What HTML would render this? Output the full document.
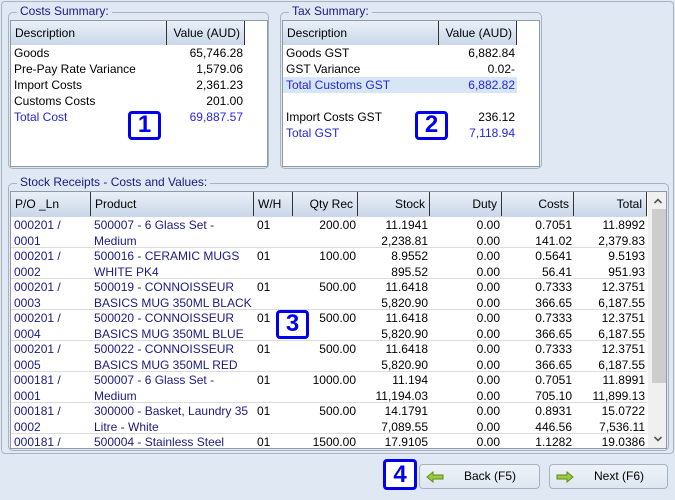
<!DOCTYPE html>
<html><head><meta charset="utf-8"><style>
*{box-sizing:border-box;margin:0;padding:0}
body{width:675px;height:500px;background:#dfe8f3;font-family:"Liberation Sans",sans-serif;font-size:12px;position:relative;overflow:hidden;color:#000}
.a{position:absolute}
.outer{left:1px;top:1px;width:673px;height:453px;border:1px solid #aab4c0;border-radius:4px}
.grp{border:1px solid #a9b3bf;border-radius:5px}
.leg{background:#dfe8f3;color:#1a1a80;padding:0 3px;line-height:13px}
.list{background:#fff;border:1px solid #8e9aa8}
.hdr{background:linear-gradient(#eaf0f8,#c9d7e8);height:24px;}
.hc{position:absolute;top:0;height:24px;line-height:24px;padding:0 4px;border-right:1px solid #333}
.r{text-align:right}
.blue{color:#2424e0}
.nav{color:#1a1a80}
.t{position:absolute;line-height:16px;white-space:nowrap}
.badge{position:absolute;border:3px solid #0000f0;border-radius:4px;background:#fff;color:#0000f0;font-weight:bold;font-size:24px;line-height:22px;text-align:center}
.btn{position:absolute;top:464px;height:25px;border:1px solid #a9b3bf;border-radius:4px;background:linear-gradient(#eef3f9,#dde6f1);line-height:23px;font-size:12px}
.rowline{position:absolute;left:0;width:636px;height:1px;background:#dcdcdc}
</style></head><body>
<div class="a outer"></div>

<div class="a grp" style="left:8px;top:12px;width:261px;height:157px"></div>
<div class="a leg" style="left:17px;top:5px">Costs Summary:</div>
<div class="a list" style="left:10px;top:20px;width:258px;height:147px">
 <div class="hdr" style="width:234px;position:relative">
  <div class="hc" style="left:0;width:156px">Description</div>
  <div class="hc r" style="left:156px;width:78px">Value (AUD)</div>
 </div>
 <div class="t" style="left:3px;top:24px">Goods</div><div class="t r" style="left:150px;width:82px;top:24px">65,746.28</div>
 <div class="t" style="left:3px;top:40px">Pre-Pay Rate Variance</div><div class="t r" style="left:150px;width:82px;top:40px">1,579.06</div>
 <div class="t" style="left:3px;top:56px">Import Costs</div><div class="t r" style="left:150px;width:82px;top:56px">2,361.23</div>
 <div class="t" style="left:3px;top:72px">Customs Costs</div><div class="t r" style="left:150px;width:82px;top:72px">201.00</div>
 <div class="t blue" style="left:3px;top:88px">Total Cost</div><div class="t r blue" style="left:150px;width:82px;top:88px">69,887.57</div>
</div>
<div class="badge" style="left:128px;top:111px;width:33px;height:29px">1</div>

<div class="a grp" style="left:280px;top:12px;width:262px;height:157px"></div>
<div class="a leg" style="left:289px;top:5px">Tax Summary:</div>
<div class="a list" style="left:282px;top:20px;width:258px;height:147px">
 <div class="hdr" style="width:234px;position:relative">
  <div class="hc" style="left:0;width:156px">Description</div>
  <div class="hc r" style="left:156px;width:78px">Value (AUD)</div>
 </div>
 <div class="t" style="left:3px;top:24px">Goods GST</div><div class="t r" style="left:150px;width:82px;top:24px">6,882.84</div>
 <div class="t" style="left:3px;top:40px">GST Variance</div><div class="t r" style="left:150px;width:82px;top:40px">0.02-</div>
 <div class="a" style="left:0;top:56px;width:234px;height:16px;background:#d7e6f5"></div>
 <div class="t blue" style="left:3px;top:56px">Total Customs GST</div><div class="t r blue" style="left:150px;width:82px;top:56px">6,882.82</div>
 <div class="t" style="left:3px;top:88px">Import Costs GST</div><div class="t r" style="left:150px;width:82px;top:88px">236.12</div>
 <div class="t blue" style="left:3px;top:104px">Total GST</div><div class="t r blue" style="left:150px;width:82px;top:104px">7,118.94</div>
</div>
<div class="badge" style="left:415px;top:111px;width:33px;height:29px">2</div>

<div class="a grp" style="left:8px;top:183px;width:661px;height:268px"></div>
<div class="a leg" style="left:17px;top:176px">Stock Receipts - Costs and Values:</div>
<div class="a list" style="left:10px;top:191px;width:657px;height:258px;overflow:hidden">
 <div class="hdr" style="width:636px;position:relative;height:25px">
  <div class="hc" style="left:0;width:80px">P/O _Ln</div>
  <div class="hc" style="left:80px;width:163px">Product</div>
  <div class="hc" style="left:243px;width:39px">W/H</div>
  <div class="hc r" style="left:282px;width:65px">Qty Rec</div>
  <div class="hc r" style="left:347px;width:72px">Stock</div>
  <div class="hc r" style="left:419px;width:72px">Duty</div>
  <div class="hc r" style="left:491px;width:72px">Costs</div>
  <div class="hc r" style="left:563px;width:73px">Total</div>
 </div>
 <div class="a" style="left:0;top:25px;width:636px;height:240px">
 <div class="a" style="left:0;top:0;width:636px;height:31px">
  <div class="t nav" style="left:3px;top:0">000201 /<br>0001</div><div class="t nav" style="left:83px;top:0">500007 - 6 Glass Set -<br>Medium</div><div class="t" style="left:246px;top:0">01</div><div class="t r" style="left:282px;width:63px;top:0">200.00</div><div class="t r" style="left:347px;width:70px;top:0">11.1941<br>2,238.81</div><div class="t r" style="left:419px;width:70px;top:0">0.00<br>0.00</div><div class="t r" style="left:491px;width:70px;top:0">0.7051<br>141.02</div><div class="t r" style="left:563px;width:71px;top:0">11.8992<br>2,379.83</div>
  <div class="rowline" style="top:30px"></div></div>
 <div class="a" style="left:0;top:31px;width:636px;height:31px">
  <div class="t nav" style="left:3px;top:0">000201 /<br>0002</div><div class="t nav" style="left:83px;top:0">500016 - CERAMIC MUGS<br>WHITE PK4</div><div class="t" style="left:246px;top:0">01</div><div class="t r" style="left:282px;width:63px;top:0">100.00</div><div class="t r" style="left:347px;width:70px;top:0">8.9552<br>895.52</div><div class="t r" style="left:419px;width:70px;top:0">0.00<br>0.00</div><div class="t r" style="left:491px;width:70px;top:0">0.5641<br>56.41</div><div class="t r" style="left:563px;width:71px;top:0">9.5193<br>951.93</div>
  <div class="rowline" style="top:30px"></div></div>
 <div class="a" style="left:0;top:62px;width:636px;height:31px">
  <div class="t nav" style="left:3px;top:0">000201 /<br>0003</div><div class="t nav" style="left:83px;top:0">500019 - CONNOISSEUR<br>BASICS MUG 350ML BLACK</div><div class="t" style="left:246px;top:0">01</div><div class="t r" style="left:282px;width:63px;top:0">500.00</div><div class="t r" style="left:347px;width:70px;top:0">11.6418<br>5,820.90</div><div class="t r" style="left:419px;width:70px;top:0">0.00<br>0.00</div><div class="t r" style="left:491px;width:70px;top:0">0.7333<br>366.65</div><div class="t r" style="left:563px;width:71px;top:0">12.3751<br>6,187.55</div>
  <div class="rowline" style="top:30px"></div></div>
 <div class="a" style="left:0;top:93px;width:636px;height:31px">
  <div class="t nav" style="left:3px;top:0">000201 /<br>0004</div><div class="t nav" style="left:83px;top:0">500020 - CONNOISSEUR<br>BASICS MUG 350ML BLUE</div><div class="t" style="left:246px;top:0">01</div><div class="t r" style="left:282px;width:63px;top:0">500.00</div><div class="t r" style="left:347px;width:70px;top:0">11.6418<br>5,820.90</div><div class="t r" style="left:419px;width:70px;top:0">0.00<br>0.00</div><div class="t r" style="left:491px;width:70px;top:0">0.7333<br>366.65</div><div class="t r" style="left:563px;width:71px;top:0">12.3751<br>6,187.55</div>
  <div class="rowline" style="top:30px"></div></div>
 <div class="a" style="left:0;top:124px;width:636px;height:31px">
  <div class="t nav" style="left:3px;top:0">000201 /<br>0005</div><div class="t nav" style="left:83px;top:0">500022 - CONNOISSEUR<br>BASICS MUG 350ML RED</div><div class="t" style="left:246px;top:0">01</div><div class="t r" style="left:282px;width:63px;top:0">500.00</div><div class="t r" style="left:347px;width:70px;top:0">11.6418<br>5,820.90</div><div class="t r" style="left:419px;width:70px;top:0">0.00<br>0.00</div><div class="t r" style="left:491px;width:70px;top:0">0.7333<br>366.65</div><div class="t r" style="left:563px;width:71px;top:0">12.3751<br>6,187.55</div>
  <div class="rowline" style="top:30px"></div></div>
 <div class="a" style="left:0;top:155px;width:636px;height:31px">
  <div class="t nav" style="left:3px;top:0">000181 /<br>0001</div><div class="t nav" style="left:83px;top:0">500007 - 6 Glass Set -<br>Medium</div><div class="t" style="left:246px;top:0">01</div><div class="t r" style="left:282px;width:63px;top:0">1000.00</div><div class="t r" style="left:347px;width:70px;top:0">11.194<br>11,194.03</div><div class="t r" style="left:419px;width:70px;top:0">0.00<br>0.00</div><div class="t r" style="left:491px;width:70px;top:0">0.7051<br>705.10</div><div class="t r" style="left:563px;width:71px;top:0">11.8991<br>11,899.13</div>
  <div class="rowline" style="top:30px"></div></div>
 <div class="a" style="left:0;top:186px;width:636px;height:31px">
  <div class="t nav" style="left:3px;top:0">000181 /<br>0002</div><div class="t nav" style="left:83px;top:0">300000 - Basket, Laundry 35<br>Litre - White</div><div class="t" style="left:246px;top:0">01</div><div class="t r" style="left:282px;width:63px;top:0">500.00</div><div class="t r" style="left:347px;width:70px;top:0">14.1791<br>7,089.55</div><div class="t r" style="left:419px;width:70px;top:0">0.00<br>0.00</div><div class="t r" style="left:491px;width:70px;top:0">0.8931<br>446.56</div><div class="t r" style="left:563px;width:71px;top:0">15.0722<br>7,536.11</div>
  <div class="rowline" style="top:30px"></div></div>
 <div class="a" style="left:0;top:217px;width:636px;height:31px">
  <div class="t nav" style="left:3px;top:0">000181 /</div><div class="t nav" style="left:83px;top:0">500004 - Stainless Steel</div><div class="t" style="left:246px;top:0">01</div><div class="t r" style="left:282px;width:63px;top:0">1500.00</div><div class="t r" style="left:347px;width:70px;top:0">17.9105</div><div class="t r" style="left:419px;width:70px;top:0">0.00</div><div class="t r" style="left:491px;width:70px;top:0">1.1282</div><div class="t r" style="left:563px;width:71px;top:0">19.0386</div>
 </div>
 </div>
 <div class="a" style="left:637px;top:0;width:19px;height:256px;background:#f0f0f0"></div>
 <div class="a" style="left:641px;top:17px;width:14px;height:174px;background:#cdcdcd"></div>
 <svg class="a" style="left:642px;top:5px" width="10" height="8" viewBox="0 0 10 8"><path d="M1.5 6 L5 2.5 L8.5 6" fill="none" stroke="#555" stroke-width="1.6"/></svg>
 <svg class="a" style="left:642px;top:243px" width="10" height="8" viewBox="0 0 10 8"><path d="M1.5 2 L5 5.5 L8.5 2" fill="none" stroke="#555" stroke-width="1.6"/></svg>
</div>
<div class="badge" style="left:276px;top:310px;width:33px;height:29px">3</div>

<div class="badge" style="left:383px;top:459px;width:34px;height:31px;line-height:25px">4</div>
<div class="btn" style="left:419px;width:121px">
 <svg class="a" style="left:6px;top:6px" width="18" height="12" viewBox="0 0 18 12"><path d="M1 6 L7 1 L7 4 L17 4 L17 8 L7 8 L7 11 Z" fill="#9ccc3c" stroke="#5a8a1a" stroke-width="1"/></svg>
 <span class="a" style="left:44px;top:0">Back (F5)</span>
</div>
<div class="btn" style="left:549px;width:119px">
 <svg class="a" style="left:6px;top:6px" width="18" height="12" viewBox="0 0 18 12"><path d="M17 6 L11 1 L11 4 L1 4 L1 8 L11 8 L11 11 Z" fill="#9ccc3c" stroke="#5a8a1a" stroke-width="1"/></svg>
 <span class="a" style="left:44px;top:0">Next (F6)</span>
</div>
</body></html>
